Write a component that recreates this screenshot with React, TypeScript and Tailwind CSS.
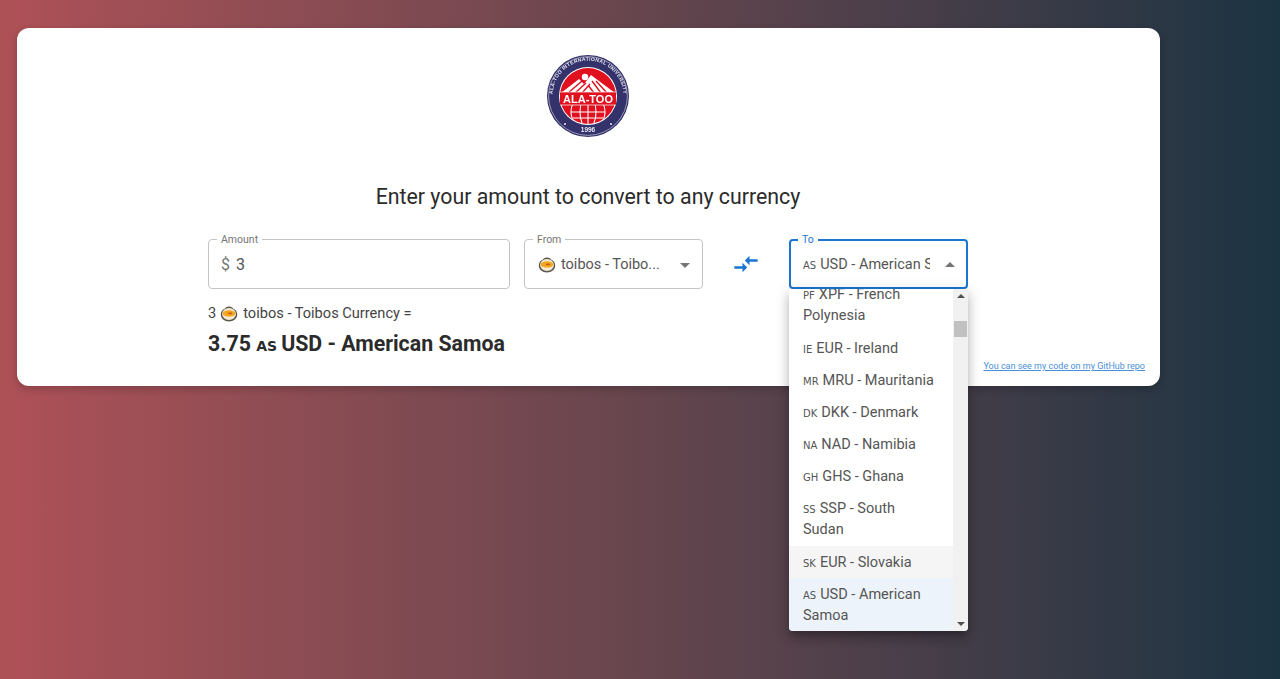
const ROBOTO = "font-['Roboto',sans-serif]";

type Opt = { flag: string; label: string; second?: string; cls?: string };

const options: Opt[] = [
  { flag: "PF", label: "XPF - French", second: "Polynesia" },
  { flag: "IE", label: "EUR - Ireland" },
  { flag: "MR", label: "MRU - Mauritania" },
  { flag: "DK", label: "DKK - Denmark" },
  { flag: "NA", label: "NAD - Namibia" },
  { flag: "GH", label: "GHS - Ghana" },
  { flag: "SS", label: "SSP - South", second: "Sudan" },
  { flag: "SK", label: "EUR - Slovakia", cls: "bg-[#f5f5f5]" },
  { flag: "AS", label: "USD - American", second: "Samoa", cls: "bg-[#edf3fa]" },
];

function Flag({ code, big }: { code: string; big?: boolean }) {
  return (
    <span
      className={
        big
          ? "font-['DejaVu_Sans',sans-serif] text-[14px] leading-none font-bold mr-[4px]"
          : "font-['DejaVu_Sans',sans-serif] text-[10px] leading-none mr-[4px]"
      }
    >
      {code}
    </span>
  );
}

function Toibos() {
  return (
    <svg width="18" height="16" viewBox="0 0 18 16" className="shrink-0">
      <path d="M9 0.5C6.5 0.5 5.5 1.6 5 2.4C2.4 3.4 0.8 5.6 0.8 8.4C0.8 12.4 4.4 15.4 9 15.4C13.6 15.4 17.2 12.4 17.2 8.4C17.2 5.6 15.6 3.4 13 2.4C12.5 1.6 11.5 0.5 9 0.5Z" fill="#5c584f" />
      <ellipse cx="9" cy="8" rx="6.9" ry="5.9" fill="#f5ead4" />
      <ellipse cx="9" cy="7.4" rx="6.3" ry="3.2" fill="#f2a71e" />
      <ellipse cx="10" cy="7.4" rx="2.4" ry="0.8" fill="#c9591a" />
    </svg>
  );
}

function Logo() {
  return (
    <svg width="84" height="84" viewBox="0 0 84 84" className="blur-[0.5px]">
      <defs>
        <path id="ringTop" d="M 14 64 A 35.5 35.5 0 1 1 70 64" fill="none" />
        <clipPath id="inner">
          <circle cx="42" cy="42" r="28" />
        </clipPath>
      </defs>
      <circle cx="42" cy="42" r="41" fill="#34326a" />
      <circle cx="42" cy="42" r="39.4" fill="none" stroke="#d9d9e6" strokeWidth="0.6" />
      <circle cx="42" cy="42" r="29" fill="#ffffff" />
      <circle cx="42" cy="42" r="28" fill="#e0101f" />
      <g clipPath="url(#inner)">
        <polygon points="15,39 33,25 38,30 45,21 69,39" fill="#ffffff" />
        <path d="M22 39 L36 27 M29 39 L40 29 M36 39 L44 30 M50 27 L61 39 M46 27 L55 39 M42 31 L48 39" stroke="#e0101f" strokeWidth="1.4" />
        <circle cx="42" cy="58" r="17" fill="none" stroke="#ffffff" strokeWidth="1.1" />
        <ellipse cx="42" cy="58" rx="8" ry="17" fill="none" stroke="#ffffff" strokeWidth="1.1" />
        <path d="M42 41 V75 M25 58 H59 M27 64 H57" stroke="#ffffff" strokeWidth="1.1" />
      </g>
      <circle cx="39" cy="23" r="3.2" fill="#ffffff" />
      <rect x="14" y="38" width="56" height="13" fill="#e0101f" />
      <path d="M14 38 H70 M14 51 H70" stroke="#ffffff" strokeWidth="0.7" />
      <text x="42" y="48.5" textAnchor="middle" fill="#ffffff" fontSize="11" fontWeight="700" fontFamily="Liberation Sans, sans-serif">
        ALA-TOO
      </text>
      <text fill="#e8e8f2" fontSize="5" fontWeight="700" letterSpacing="0.35" fontFamily="Liberation Sans, sans-serif">
        <textPath href="#ringTop" startOffset="50%" textAnchor="middle">
          ALA-TOO INTERNATIONAL UNIVERSITY
        </textPath>
      </text>
      <circle cx="19" cy="70" r="1" fill="#e8e8f2" />
      <circle cx="65" cy="70" r="1" fill="#e8e8f2" />
      <text x="42" y="78" textAnchor="middle" fill="#e8e8f2" fontSize="6.5" fontWeight="700" fontFamily="Liberation Sans, sans-serif">
        1996
      </text>
    </svg>
  );
}

function Field({
  label,
  focused,
  className,
  children,
}: {
  label: string;
  focused?: boolean;
  className: string;
  children: React.ReactNode;
}) {
  return (
    <div
      className={`relative h-[50px] rounded-[4px] flex items-center pt-[1px] ${
        focused ? "border-2 border-[#1976d2]" : "border border-[#c4c4c4]"
      } ${className}`}
    >
      <span
        className={`absolute bg-white px-[4px] text-[10.5px] leading-[14px] ${
          focused ? "left-[7px] -top-[8px] text-[#1976d2]" : "left-[8px] -top-[7px] text-[#757575]"
        }`}
      >
        {label}
      </span>
      {children}
    </div>
  );
}

function Caret({ up }: { up?: boolean }) {
  return (
    <svg width="24" height="24" viewBox="0 0 24 24" fill="#757575" className="shrink-0">
      <path d={up ? "M7 14l5-5 5 5z" : "M7 10l5 5 5-5z"} />
    </svg>
  );
}

function Dropdown() {
  return (
    <div className="absolute left-[-2px] top-[48px] z-10 w-[179px] h-[342px] flex overflow-hidden rounded-b-[4px] bg-white shadow-[0_5px_5px_-3px_rgba(0,0,0,0.2),0_8px_10px_1px_rgba(0,0,0,0.14),0_3px_14px_2px_rgba(0,0,0,0.12)]">
      <ul className="flex-1 -mt-[11px] text-[14.5px] leading-[21px] text-[#555555]">
        {options.map((o) => (
          <li key={o.flag} className={`px-[14px] py-[5.5px] ${o.cls ?? ""}`}>
            <div>
              <Flag code={o.flag} />
              {o.label}
            </div>
            {o.second && <div className="leading-[22px]">{o.second}</div>}
          </li>
        ))}
      </ul>
      <div className="w-[15px] shrink-0 bg-[#f1f1f1] flex flex-col items-center justify-between py-[5px]">
        <div className="w-full flex flex-col items-center">
          <div className="w-0 h-0 border-x-[4px] border-x-transparent border-b-[4px] border-b-[#505050]" />
          <div className="mt-[23px] w-[13px] h-[16px] bg-[#c1c1c1]" />
        </div>
        <div className="w-0 h-0 border-x-[4px] border-x-transparent border-t-[4px] border-t-[#505050]" />
      </div>
    </div>
  );
}

export default function App() {
  return (
    <div className={`h-[679px] overflow-hidden pt-[28px] pl-[17px] bg-gradient-to-r from-[#ae5157] to-[#1b3342] ${ROBOTO}`}>
      <div className="w-[1143px] h-[358px] bg-white rounded-[12px] shadow-[0_3px_8px_rgba(0,0,0,0.2)] grid grid-cols-[191px_760px_192px] grid-rows-[158px_1fr]">
        <div className="col-span-3 flex flex-col items-center pt-[26px] pr-[2px]">
          <Logo />
        </div>
        <div />
        <div className="flex flex-col">
          <h1 className="text-center text-[21.33px] leading-[1] font-normal text-[#2b2b2b]">
            Enter your amount to convert to any currency
          </h1>
          <div className="flex items-start mt-[32px]">
            <Field label="Amount" className="w-[302px] pl-[12px] text-[16px] text-[#666666]">
              <span className="text-[#757575]">$</span>
              <span className="ml-[6px] text-[#555555]">3</span>
            </Field>
            <Field label="From" className="ml-[14px] w-[179px] pl-[13px] pr-[5px] text-[14.5px] text-[#555555]">
              <Toibos />
              <span className="ml-[5px] flex-1 whitespace-nowrap overflow-hidden">toibos - Toibo...</span>
              <Caret />
            </Field>
            <div className="w-[86px] h-[50px] flex items-center justify-center">
              <svg width="28" height="28" viewBox="0 0 24 24" fill="#1976d2">
                <path d="M9.01 14H2v2h7.01v3L13 15l-3.99-4v3zm5.98-1v-3H22V8h-7.01V5L11 9l3.99 4z" />
              </svg>
            </div>
            <Field label="To" focused className="w-[179px] pl-[12px] pr-[4px] text-[14.5px] text-[#555555]">
              <span className="w-[127px] whitespace-nowrap overflow-hidden">
                <Flag code="AS" />
                USD - American Samoa
              </span>
              <span className="ml-auto flex"><Caret up /></span>
              <Dropdown />
            </Field>
          </div>
          <div className="mt-[14px] flex items-center text-[14.6px] leading-[21px] text-[#444444]">
            3<span className="ml-[4px] mr-[5px] flex"><Toibos /></span>toibos - Toibos Currency =
          </div>
          <div className="mt-[5px] text-[21.33px] leading-[30px] font-bold text-[#2b2b2b]">
            3.75 <Flag code="AS" big />USD - American Samoa
          </div>
        </div>
        <div className="flex items-end justify-end pr-[15px] pb-[14px]">
          <a className="text-[9px] leading-[12px] text-[#4a90d9] underline whitespace-nowrap">
            You can see my code on my GitHub repo
          </a>
        </div>
      </div>
    </div>
  );
}
